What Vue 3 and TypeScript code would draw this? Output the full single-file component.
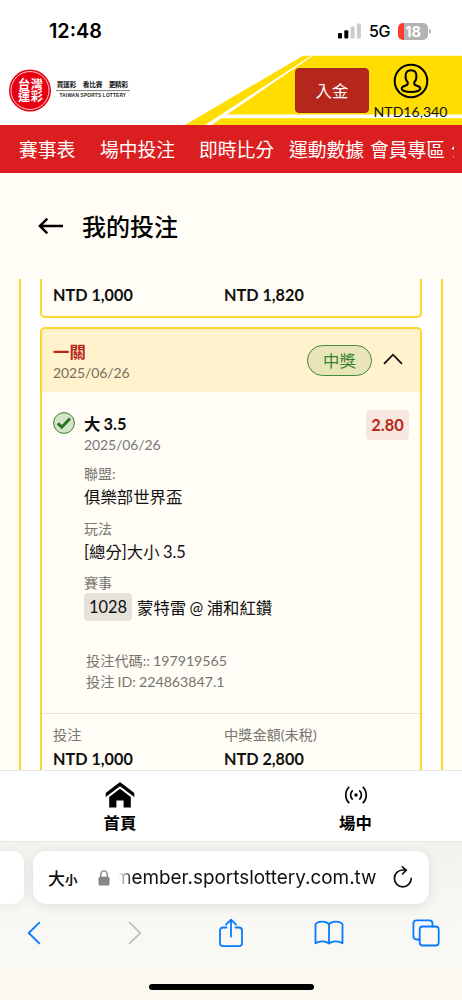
<script setup lang="ts">
interface DetailRow {
  label: string
  value: string
  code?: string
}

const navItems: string[] = ['賽事表', '場中投注', '即時比分', '運動數據', '會員專區', '公']

const details: DetailRow[] = [
  { label: '聯盟:', value: '俱樂部世界盃' },
  { label: '玩法', value: '[總分]大小 3.5' },
  { label: '賽事', value: '蒙特雷 @ 浦和紅鑽', code: '1028' },
]
</script>

<template>
  <div class="phone">
    <div class="status">
      <span class="clock">12:48</span>
      <div class="indicators">
        <svg class="signal" width="23" height="16" viewBox="0 0 23 16">
          <rect x="0" y="10" width="4" height="5.4" rx="1" fill="#000" />
          <rect x="6.3" y="7.3" width="4" height="8.1" rx="1" fill="#000" />
          <rect x="12.6" y="3.6" width="4" height="11.8" rx="1" fill="#ccc" />
          <rect x="18.9" y="0.5" width="4" height="14.9" rx="1" fill="#ccc" />
        </svg>
        <span class="network">5G</span>
        <span class="battery"><span class="level">18</span></span>
        <span class="battery-tip"></span>
      </div>
    </div>

    <header class="top">
      <svg class="stripes" width="462" height="70" viewBox="0 0 462 70">
        <path d="M185 70 303 .7H462V70Z" fill="#ffdd00" />
        <path d="M205 70 311 .7h2L227 59.6H462v3.6H221L212 70Z" fill="#fff" />
      </svg>
      <svg class="logo" width="140" height="60" viewBox="0 0 140 60">
        <circle cx="30" cy="30.5" r="21" fill="#e60012" />
        <circle cx="30" cy="30.5" r="19" fill="none" stroke="#fff" stroke-width=".8" />
        <g class="logo-mark" fill="#fff" font-size="12.2">
          <text x="18" y="29.2" textLength="25">台灣</text>
          <text x="18" y="41.4" textLength="25">運彩</text>
        </g>
        <g class="logo-slogan" fill="#111" font-size="6.7">
          <text x="56.7" y="27.3" textLength="19.5">買運彩</text>
          <text x="82.7" y="27.3" textLength="19.8">看比賽</text>
          <text x="108.7" y="27.3" textLength="19.5">更精彩</text>
        </g>
        <path d="M56 30.6H130" stroke="#444" stroke-width=".7" />
        <text class="logo-latin" x="59.5" y="37.3" font-size="4.7" textLength="66.5" fill="#222">TAIWAN SPORTS LOTTERY</text>
      </svg>
      <button class="deposit">入金</button>
      <div class="account">
        <svg width="36" height="36" viewBox="0 0 36 36" fill="none" stroke="#000">
          <circle cx="18" cy="18" r="16.3" stroke-width="2" />
          <path d="M14.7 19.2c-1.7-1.5-2.3-4-2.1-6.7.2-3.5 2.3-5.2 5.4-5.2s5.2 1.7 5.4 5.2c.2 2.7-.4 5.2-2.1 6.7-.5 1.8.2 2.8 1.9 3.3 2.2.7 3.9 1.2 4.1 2.9.2 2.2-3.6 3.5-9.3 3.5s-9.5-1.3-9.3-3.5c.2-1.7 1.9-2.2 4.1-2.9 1.7-.5 2.4-1.5 1.9-3.3Z" stroke-width="2" stroke-linejoin="round" />
        </svg>
        <span class="balance">NTD16,340</span>
      </div>
    </header>

    <nav class="menu">
      <span v-for="item in navItems" :key="item">{{ item }}</span>
    </nav>

    <div class="heading">
      <svg width="26" height="20" viewBox="0 0 26 20" fill="none" stroke="#000" stroke-width="2.5">
        <path d="M25 10H2M9.3 2.6 1.9 10l7.4 7.4" />
      </svg>
      <h1>我的投注</h1>
    </div>

    <main class="scroll">
      <div class="list">
        <section class="card card-previous">
          <div class="amounts">
            <b>NTD 1,000</b>
            <b>NTD 1,820</b>
          </div>
        </section>

        <section class="card">
          <div class="card-head">
            <div class="card-title">
              <strong>一關</strong>
              <span>2025/06/26</span>
            </div>
            <span class="result">中獎</span>
            <svg class="chevron" width="20" height="12" viewBox="0 0 20 12" fill="none" stroke="#111" stroke-width="1.8">
              <path d="M1 10.8 10 1.7l9 9.1" />
            </svg>
          </div>

          <div class="card-body">
            <svg class="check" width="22" height="22" viewBox="0 0 22 22">
              <circle cx="11" cy="11" r="10.4" fill="#d5e2cc" stroke="#39802f" stroke-width="1" />
              <path d="m4.8 11.4 4 3.8 8.2-8.7" fill="none" stroke="#2b7520" stroke-width="3" />
            </svg>
            <div class="selection">
              <div class="pick">大 3.5</div>
              <div class="date">2025/06/26</div>
              <div v-for="row in details" :key="row.label" class="detail">
                <div class="label">{{ row.label }}</div>
                <div class="value">
                  <span v-if="row.code" class="code">{{ row.code }}</span>{{ row.value }}
                </div>
              </div>
              <div class="ids">
                <div>投注代碼:: 197919565</div>
                <div>投注 ID: 224863847.1</div>
              </div>
            </div>
            <span class="odds">2.80</span>
          </div>

          <div class="card-foot">
            <div class="amounts captions">
              <span>投注</span>
              <span>中獎金額(未稅)</span>
            </div>
            <div class="amounts">
              <b>NTD 1,000</b>
              <b>NTD 2,800</b>
            </div>
          </div>
        </section>
      </div>
    </main>

    <div class="tabs">
      <div class="tab tab-home">
        <svg width="30" height="26" viewBox="0 0 30 26" fill="#000">
          <path d="M15 0 29.3 11v4L15 4.3.7 15v-4Z" />
          <path d="M15 6.7 25.8 15v10.6H18.6v-7.2h-7.2v7.2H4.2V15Z" />
        </svg>
        <span>首頁</span>
      </div>
      <div class="tab tab-live">
        <svg width="24" height="18" viewBox="0 0 24 18" fill="none" stroke="#000" stroke-width="1.7">
          <circle cx="12" cy="9" r="1.7" fill="#000" stroke="none" />
          <path d="M8.7 4.3a6.3 6.3 0 0 0 0 9.4M15.3 4.3a6.3 6.3 0 0 1 0 9.4M5.2 .9a11.2 11.2 0 0 0 0 16.2M18.8 .9a11.2 11.2 0 0 1 0 16.2" />
        </svg>
        <span>場中</span>
      </div>
    </div>

    <div class="browser">
      <div class="address-row">
        <div class="previous-tab"></div>
        <div class="address">
          <span class="size-large">大</span><span class="size-small">小</span>
          <svg class="lock" width="12" height="16" viewBox="0 0 12 16">
            <path d="M2.8 8V4.5a3.2 3.6 0 0 1 6.4 0V8" fill="none" stroke="#85858a" stroke-width="1.4" />
            <rect x=".5" y="6.8" width="11" height="8.8" rx="1.5" fill="#85858a" />
          </svg>
          <span class="url">member.sportslottery.com.tw</span>
          <svg class="reload" width="20" height="24" viewBox="0 0 20 24" fill="none" stroke="#111" stroke-width="1.7" stroke-linecap="round" stroke-linejoin="round">
            <path d="M18.2 12.4A8.4 8.4 0 1 1 9.8 4h3.4M9.3 .9 13.3 4.2 9.5 8" />
          </svg>
        </div>
      </div>
      <div class="toolbar">
        <svg class="back" width="14" height="24" viewBox="0 0 14 24"><path d="M12.4 1.7 1.7 12l10.7 10.3" /></svg>
        <svg class="forward" width="14" height="24" viewBox="0 0 14 24"><path d="M1.6 1.7 12.3 12 1.6 22.3" /></svg>
        <svg class="share" width="26" height="30" viewBox="0 0 26 30"><path d="M8.5 9.5H5.2Q2 9.5 2 12.7V25q0 3.2 3.2 3.2h15.6Q24 28.2 24 25V12.7q0-3.2-3.2-3.2h-3.3M13 18.5V2M8 6.7 13 1.7l5 5" /></svg>
        <svg class="bookmarks" width="30" height="26" viewBox="0 0 30 26"><path d="M15 4.5v19M15 4.5C12.5.7 4 .7 1.5 4.3v19c3.5-2.6 10-2.6 13.5.2 3.5-2.8 10-2.8 13.5-.2v-19C26 .7 17.5.7 15 4.5Z" /></svg>
        <svg class="pages" width="28" height="28" viewBox="0 0 28 28"><rect x="7.7" y="7.5" width="19" height="19" rx="3" /><path d="M7.7 20.5H4.6Q1.4 20.5 1.4 17.3V4.6Q1.4 1.4 4.6 1.4H17.3Q20.5 1.4 20.5 4.6V7.5" /></svg>
      </div>
      <div class="home-indicator"></div>
    </div>
  </div>
</template>

<style>
html,
body {
  margin: 0;
  background: #fffdf5;
}
</style>

<style scoped>
.phone {
  width: 462px;
  height: 1000px;
  overflow: hidden;
  display: flex;
  flex-direction: column;
  background: #fffdf5;
  color: #111;
  font-family: Lato, 'Noto Sans CJK TC', sans-serif;
}
.phone > * {
  flex: none;
}
.status {
  height: 55px;
  box-sizing: border-box;
  padding: 18px 31px 0 49px;
  display: flex;
  justify-content: space-between;
  align-items: flex-start;
  background: #fff;
  font-family: Inter, sans-serif;
}
.clock {
  font-size: 19.8px;
  font-weight: 600;
  line-height: 26px;
  color: #000;
}
.indicators {
  display: flex;
  align-items: center;
  height: 26px;
}
.network {
  margin-left: 8px;
  width: 22px;
  font-size: 16px;
  font-weight: 500;
  letter-spacing: -0.3px;
  color: #000;
}
.battery {
  margin-left: 7px;
  width: 30px;
  height: 17px;
  border-radius: 5px;
  background: linear-gradient(90deg, #ff3b30 6px, #b3b3b3 6px);
  display: flex;
  justify-content: center;
}
.level {
  color: #fff;
  font-size: 14.5px;
  font-weight: 700;
  line-height: 17px;
}
.battery-tip {
  width: 2px;
  height: 5px;
  margin-left: 1px;
  border-radius: 0 2px 2px 0;
  background: #b8b8b8;
}
.top {
  position: relative;
  height: 70px;
  display: flex;
  align-items: flex-start;
  background: #fff;
}
.stripes {
  position: absolute;
  inset: 0;
}
.logo {
  position: relative;
  margin-top: 5px;
}
.logo-mark {
  font-family: 'Noto Sans CJK TC', sans-serif;
  font-weight: 700;
}
.logo-slogan {
  font-family: 'Noto Sans CJK TC', sans-serif;
  font-weight: 700;
}
.logo-latin {
  font-family: 'Liberation Sans', sans-serif;
  font-weight: 700;
}
.deposit {
  position: relative;
  margin: 13px 0 0 155px;
  padding: 0;
  width: 74px;
  height: 45px;
  border: 1px solid #9f2a19;
  border-radius: 4px;
  background: #b5261c;
  color: #fff;
  font: 16.4px/43px Lato, 'Noto Sans CJK TC', sans-serif;
}
.account {
  position: relative;
  margin: 8px 0 0 4px;
  width: 75px;
  display: flex;
  flex-direction: column;
  align-items: center;
}
.balance {
  font-size: 14.1px;
  line-height: 18px;
  margin-top: 4px;
  white-space: nowrap;
}
.menu {
  height: 48px;
  box-sizing: border-box;
  padding-left: 19px;
  width: 462px;
  display: flex;
  background: #db1f20;
  color: #fff;
  font-size: 18.8px;
  line-height: 50px;
  white-space: nowrap;
}
.menu span:nth-child(1) {
  width: 81px;
}
.menu span:nth-child(2) {
  width: 99px;
}
.menu span:nth-child(3) {
  width: 90px;
}
.menu span:nth-child(4) {
  width: 81px;
}
.menu span:nth-child(5) {
  width: 81px;
}
.menu span:nth-child(6) {
  width: 3px;
  overflow: hidden;
}
.heading {
  height: 106px;
  box-sizing: border-box;
  padding: 36px 0 0 38px;
  display: flex;
  align-items: flex-start;
}
.heading svg {
  margin-top: 7px;
}
h1 {
  margin: 0 0 0 18px;
  font-size: 24px;
  font-weight: 500;
  font-family: 'Noto Sans CJK TC', sans-serif;
  line-height: 33px;
  color: #000;
}
.scroll {
  height: 491px;
  padding: 0 19px;
  overflow: hidden;
}
.list {
  height: 600px;
  box-sizing: border-box;
  border: solid #fdd62c;
  border-width: 0 2px;
  padding: 0 19px;
  background: #fff;
}
.card {
  border: 2px solid #fdd62c;
  border-radius: 5px;
  background: #fffdf5;
  overflow: hidden;
}
.card-previous {
  height: 37px;
  margin-bottom: 9px;
  border-top: 0;
  border-radius: 0 0 5px 5px;
}
.amounts {
  display: grid;
  grid-template-columns: 171px 1fr;
  padding-left: 11px;
  font-size: 16.2px;
  line-height: 24px;
}
.card-previous .amounts {
  padding-top: 4px;
}
.card-head {
  height: 63px;
  box-sizing: border-box;
  display: flex;
  padding: 0 17px 0 11px;
  background: #fff2cc;
}
.card-title {
  flex: 1;
  display: flex;
  flex-direction: column;
  padding-top: 12px;
}
.card-title strong {
  color: #b8281c;
  font-size: 16.4px;
  line-height: 21px;
}
.card-title span {
  color: #77705f;
  font-size: 14px;
  letter-spacing: -0.1px;
  line-height: 21px;
}
.result {
  width: 65px;
  height: 31px;
  box-sizing: border-box;
  margin-top: 16px;
  border: 1px solid #408a36;
  border-radius: 16px;
  background: #e8e6b8;
  color: #39802f;
  font-size: 16.4px;
  line-height: 29px;
  text-align: center;
}
.chevron {
  margin: 24px 0 0 11px;
}
.card-body {
  display: flex;
  align-items: flex-start;
  height: 321px;
  box-sizing: border-box;
  padding: 18px 11px 0 11px;
}
.check {
  margin-top: 2px;
}
.selection {
  flex: 1;
  margin-left: 9px;
  padding-top: 3px;
}
.pick {
  font-size: 16.4px;
  font-weight: 700;
  line-height: 22px;
  word-spacing: -0.8px;
}
.date {
  color: #777;
  font-size: 14px;
  letter-spacing: -0.1px;
  line-height: 20px;
  margin-bottom: 8px;
}
.detail {
  height: 54.5px;
}
.label {
  color: #77756f;
  font-size: 14px;
  line-height: 21px;
}
.value {
  display: flex;
  align-items: center;
  font-size: 16.4px;
  line-height: 25px;
  white-space: pre;
  word-spacing: -0.8px;
}
.code {
  width: 48px;
  height: 28px;
  margin-right: 5px;
  border-radius: 4px;
  background: #e5e2dc;
  text-align: center;
  line-height: 28px;
}
.ids {
  padding: 23px 0 0 2px;
  color: #77756f;
  font-size: 14.2px;
  line-height: 21.5px;
  word-spacing: -0.5px;
}
.odds {
  width: 43px;
  height: 30px;
  border-radius: 4px;
  background: #f8e7df;
  color: #b8281c;
  font-size: 16.4px;
  font-weight: 700;
  line-height: 30px;
  text-align: center;
}
.card-foot {
  border-top: 1px solid #e6e4de;
  padding: 9px 0 20px;
}
.captions {
  color: #77756f;
  font-size: 14.2px;
}
.tabs {
  height: 71px;
  box-sizing: border-box;
  border-top: 1px solid #e4e4e2;
  display: flex;
  background: #fff;
}
.tab {
  flex: none;
  display: flex;
  flex-direction: column;
  align-items: center;
  font-size: 16.4px;
  font-weight: 700;
  line-height: 24px;
  color: #000;
}
.tab-home {
  width: 240px;
  padding-top: 11px;
}
.tab-home span {
  margin-top: 3px;
}
.tab-live {
  width: 231px;
  padding-top: 15px;
}
.tab-live span {
  margin-top: 7px;
}
.browser {
  height: 159px;
  box-sizing: border-box;
  border-top: 1px solid #e6e5df;
  background: linear-gradient(#f3f2ed, #f8f8f5 55%, #fcf9ef);
}
.address-row {
  display: flex;
  gap: 9px;
  margin-top: 9px;
}
.previous-tab {
  width: 24px;
  height: 53px;
  border-radius: 0 12px 12px 0;
  background: #fff;
  box-shadow: 0 2px 12px rgba(0, 0, 0, 0.07);
}
.address {
  width: 396px;
  height: 53px;
  box-sizing: border-box;
  padding: 0 16px 0 15px;
  border-radius: 13px;
  display: flex;
  align-items: center;
  background: #fff;
  box-shadow: 0 2px 12px rgba(0, 0, 0, 0.1);
  color: #111;
}
.size-large {
  font: 500 17px/30px 'Noto Sans CJK TC', sans-serif;
}
.size-small {
  font: 700 12.5px/30px 'Noto Sans CJK TC', sans-serif;
  padding-top: 4px;
}
.lock {
  margin-left: 20px;
}
.url {
  flex: none;
  width: 259px;
  margin-left: 8px;
  direction: rtl;
  overflow: hidden;
  white-space: nowrap;
  font: 18.9px/30px Inter, sans-serif;
  mask-image: linear-gradient(90deg, transparent, #000 15px);
}
.reload {
  margin-left: 16px;
  flex: none;
}
.toolbar {
  display: flex;
  align-items: center;
  height: 30px;
  margin: 14px 0 0 27px;
  fill: none;
  stroke: #087aff;
}
.toolbar svg {
  flex: none;
  stroke-width: 1.8;
  stroke-linecap: round;
  stroke-linejoin: round;
}
.toolbar .forward {
  margin-left: 87px;
  stroke: #c1c1bf;
}
.share {
  margin-left: 76px;
}
.bookmarks {
  margin-left: 69.5px;
}
.pages {
  margin-left: 68.5px;
}
.home-indicator {
  width: 165px;
  height: 6px;
  margin: 36px auto 0;
  border-radius: 3px;
  background: #000;
}
</style>
